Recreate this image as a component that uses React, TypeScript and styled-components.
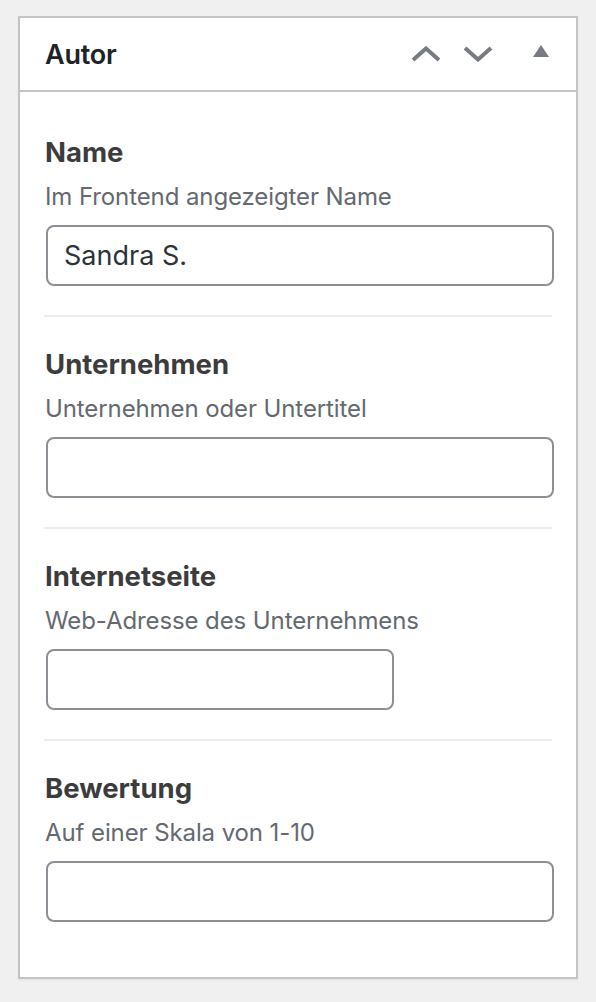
import React from 'react';
import styled, { createGlobalStyle } from 'styled-components';

const GlobalStyle = createGlobalStyle`
    html, body {
        margin: 0;
        padding: 0;
        background: #f0f0f1;
        font-family: Inter, "Noto Sans", "Liberation Sans", sans-serif;
    }
`;

const Page = styled.div`
    padding: 16px 18px 24px 18px;
`;

const Postbox = styled.div`
    background: #ffffff;
    border: 2px solid #c3c4c7;
    box-shadow: 0 2px 2px rgba(0, 0, 0, 0.04);
`;

const Header = styled.div`
    display: flex;
    align-items: center;
    height: 72px;
    padding-left: 25px;
    border-bottom: 2px solid #c3c4c7;
`;

const Title = styled.h2`
    flex: 1;
    margin: 0;
    font-size: 27px;
    font-weight: 600;
    color: #1d2327;
    letter-spacing: -0.2px;
`;

const Actions = styled.div`
    display: flex;
    align-items: center;
    height: 100%;
    margin-right: 3px;
`;

const IconButton = styled.button<{ $width: number }>`
    display: flex;
    align-items: center;
    justify-content: center;
    width: ${(p) => p.$width}px;
    height: 100%;
    padding: 0;
    border: 0;
    background: transparent;
    color: #787c82;
    cursor: pointer;
`;

const Inside = styled.div`
    padding: 13px 24px 26px 24px;
`;

const Field = styled.div`
    padding: 28px 0 29px;
    border-bottom: 2px solid #ececec;

    &:last-child {
        border-bottom: 0;
    }
`;

const Label = styled.label`
    display: block;
    font-size: 27.5px;
    line-height: 38px;
    font-weight: 700;
    color: #3c3c3c;
    padding-left: 1px;
`;

const Description = styled.p`
    margin: 8px 0 0;
    font-size: 24px;
    line-height: 36px;
    color: #646970;
    letter-spacing: -0.1px;
    padding-left: 1px;
`;

const Input = styled.input<{ $width?: number }>`
    display: block;
    box-sizing: border-box;
    width: ${(p) => (p.$width ? `${p.$width}px` : '100%')};
    height: 61px;
    margin: 10px 0 0 2px;
    padding: 0 16px;
    border: 2px solid #8c8f94;
    border-radius: 8px;
    background: #ffffff;
    font-family: inherit;
    font-size: 27px;
    color: #2c3338;
    outline: none;
`;

const ChevronUp = () => (
    <svg width="30" height="16" viewBox="0 0 30 16">
        <path d="M2 14 L15 2.5 L28 14" fill="none" stroke="currentColor" strokeWidth="4" />
    </svg>
);

const ChevronDown = () => (
    <svg width="30" height="16" viewBox="0 0 30 16">
        <path d="M2 2 L15 13.5 L28 2" fill="none" stroke="currentColor" strokeWidth="4" />
    </svg>
);

const TriangleUp = () => (
    <svg width="18" height="12" viewBox="0 0 18 12" style={{ marginTop: -6 }}>
        <path d="M9 0 L17 12 L1 12 Z" fill="currentColor" />
    </svg>
);

const fields = [
    { label: 'Name', hint: 'Im Frontend angezeigter Name', value: 'Sandra S.' },
    { label: 'Unternehmen', hint: 'Unternehmen oder Untertitel', value: '' },
    { label: 'Internetseite', hint: 'Web-Adresse des Unternehmens', value: '', width: 348 },
    { label: 'Bewertung', hint: 'Auf einer Skala von 1-10', value: '' },
];

const App: React.FC = () => {
    return (
        <>
            <GlobalStyle />
            <Page>
                <Postbox>
                    <Header>
                        <Title>Autor</Title>
                        <Actions>
                            <IconButton $width={42} aria-label="Nach oben verschieben">
                                <ChevronUp />
                            </IconButton>
                            <IconButton $width={62} aria-label="Nach unten verschieben">
                                <ChevronDown />
                            </IconButton>
                            <IconButton $width={64} aria-label="Bedienfeld umschalten">
                                <TriangleUp />
                            </IconButton>
                        </Actions>
                    </Header>
                    <Inside>
                        {fields.map((f) => (
                            <Field key={f.label}>
                                <Label>{f.label}</Label>
                                <Description>{f.hint}</Description>
                                <Input $width={f.width} defaultValue={f.value} />
                            </Field>
                        ))}
                    </Inside>
                </Postbox>
            </Page>
        </>
    );
};

export default App;
